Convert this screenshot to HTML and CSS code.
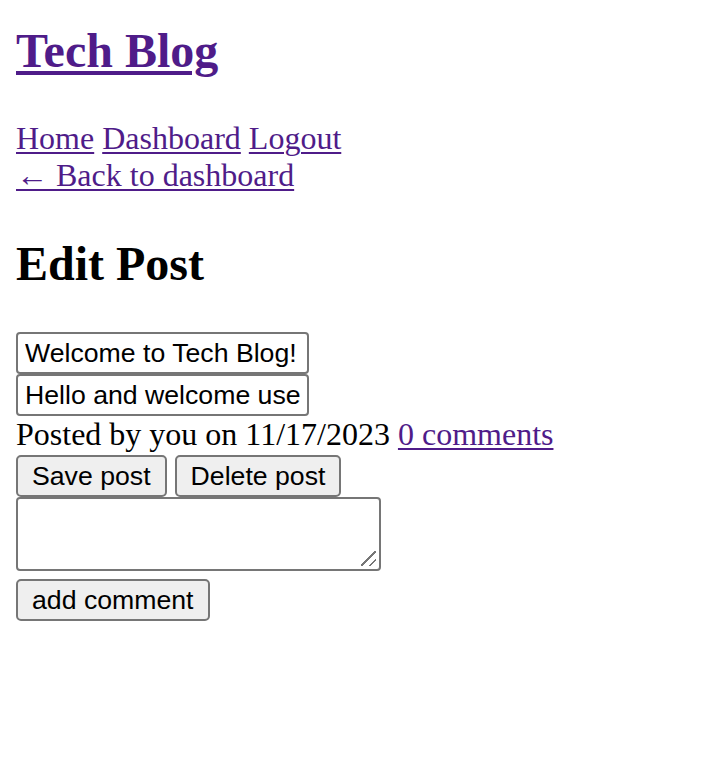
FILE: index.html
```html
<!DOCTYPE html>
<html lang="en">
<head>
<meta charset="utf-8">
<title>Tech Blog</title>
<link rel="stylesheet" href="styles.css">
</head>
<body>
  <header class="site-header">
    <h1 class="site-title"><a href="#">Tech Blog</a></h1>
    <nav class="site-nav"><a href="#">Home</a> <a href="#">Dashboard</a> <a href="#">Logout</a></nav>
  </header>
  <main class="content">
    <a class="back-link" href="#">← Back to dashboard</a>
    <h2 class="page-title">Edit Post</h2>
    <form class="edit-form">
      <input class="field" type="text" value="Welcome to Tech Blog!">
      <input class="field" type="text" value="Hello and welcome users to the Tech Blog!">
      <div class="meta">Posted by you on 11/17/2023 <a href="#">0 comments</a></div>
      <div class="actions">
        <button type="button" class="btn">Save post</button>
        <button type="button" class="btn">Delete post</button>
      </div>
      <textarea class="comment-box"></textarea>
      <button type="button" class="btn add-btn">add comment</button>
    </form>
  </main>
</body>
</html>
```

FILE: styles.css
```css
html, body {
  background: #ffffff;
}

body {
  margin: 16px;
  font-family: "Liberation Serif", "Times New Roman", serif;
  font-size: 32px;
  line-height: 37px;
  color: #000000;
}

a {
  color: #4f1c89;
  text-decoration: underline;
  text-decoration-thickness: 2px;
  text-underline-offset: 3px;
}

.site-title {
  margin: 7px 0 41px;
  font-size: 48px;
  line-height: 56px;
  font-weight: bold;
}

.site-title a {
  text-decoration-thickness: 4px;
  text-underline-offset: 4px;
}

.site-nav {
  display: block;
}

.back-link {
  display: block;
  width: fit-content;
}

.page-title {
  margin: 42px 0 40px;
  font-size: 48px;
  line-height: 56px;
  font-weight: bold;
}

.edit-form {
  display: flex;
  flex-direction: column;
  align-items: flex-start;
}

.field {
  box-sizing: border-box;
  width: 293px;
  height: 42px;
  margin: 0;
  padding: 0 7px;
  border: 2px solid #767676;
  border-radius: 4px;
  background: #ffffff;
  font-family: "Liberation Sans", Arial, sans-serif;
  font-size: 26.67px;
  color: #000000;
}

.meta {
  line-height: 37px;
}

.actions {
  display: flex;
  gap: 8px;
  margin-top: 2px;
}

.btn {
  box-sizing: border-box;
  height: 42px;
  margin: 0;
  padding: 0 14px;
  border: 2px solid #767676;
  border-radius: 5px;
  background: #efefef;
  font-family: "Liberation Sans", Arial, sans-serif;
  font-size: 26.67px;
  color: #000000;
}

.comment-box {
  box-sizing: border-box;
  width: 365px;
  height: 74px;
  margin: 0;
  padding: 4px;
  border: 2px solid #767676;
  border-radius: 4px;
  resize: none;
  background-color: #ffffff;
  background-image: linear-gradient(to bottom right,
    transparent 45%, #767676 45%, #767676 54%, transparent 54%,
    transparent 74%, #767676 74%, #767676 83%, transparent 83%);
  background-size: 15px 15px;
  background-position: right 3px bottom 3px;
  background-repeat: no-repeat;
  font-family: "Liberation Mono", monospace;
  font-size: 26.67px;
}

.add-btn {
  margin-top: 8px;
}
```
